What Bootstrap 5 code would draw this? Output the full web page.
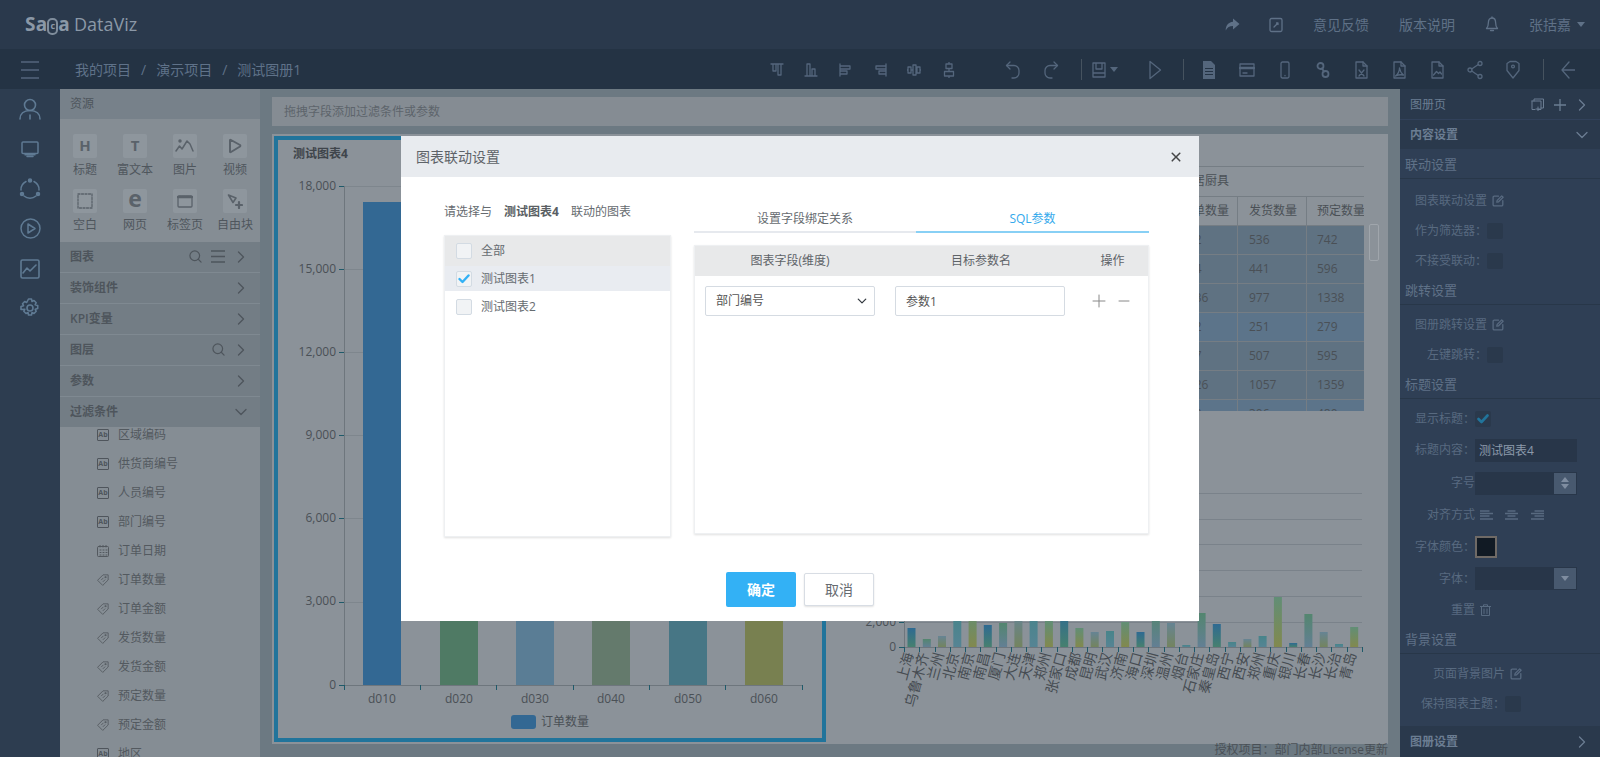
<!DOCTYPE html>
<html lang="zh-CN">
<head>
<meta charset="utf-8">
<title>DataViz</title>
<link href="https://cdn.jsdelivr.net/npm/bootstrap@5.3.0/dist/css/bootstrap.min.css" rel="stylesheet">
<style>
html,body{height:100%;}
body{font-family:"Open Sans","Noto Sans CJK SC",sans-serif;font-size:12px;background:#6c7982;overflow:hidden;}
svg.ic{fill:none;stroke:currentColor;stroke-width:1.3;stroke-linecap:round;stroke-linejoin:round;display:block;flex:none;}
svg.fl{fill:currentColor;stroke:none;}
.dv-shell{width:1600px;height:757px;position:relative;overflow:hidden;}
.dv-top{height:50px;background:#2a394c;color:#5f7187;font-size:14px;padding-left:25px;padding-right:15px;}
.dv-logo{color:#8b98a7;font-size:19px;line-height:1;white-space:nowrap;}
.dv-logo b{font-weight:700;letter-spacing:.2px;}
.dv-logo i{font-style:normal;font-size:18px;margin-left:4px;}
.dv-logo u{text-decoration:none;display:inline-block;width:11px;height:17px;margin:0;border:2px solid #7f8d9c;border-radius:5px;font-size:9px;font-weight:700;line-height:12px;text-align:center;vertical-align:2px;}
.dv-caret{width:0;height:0;border-left:4px solid transparent;border-right:4px solid transparent;border-top:5px solid currentColor;}
.dv-bar2{height:40px;background:#243344;color:#54667c;padding-left:21px;padding-right:13px;padding-top:2px;}
.dv-crumbs{font-size:14px;margin-left:36px;color:#5f7289;}
.dv-crumbs span{margin:0 10px;}
.dv-t{width:38px;display:flex;justify-content:center;flex:none;}
.dv-ta{width:34.4px;}
.dv-sep{width:1px;height:21px;background:#46535f;flex:none;}
.dv-rail{width:60px;background:#2d3d50;color:#5f7a93;padding-top:1px;}
.dv-rail>div{height:39.8px;display:flex;align-items:center;justify-content:center;}
.dv-res{width:200px;background:#858d94;color:#4e555c;overflow:hidden;}
.dv-reshead{height:30px;background:#77818a;padding-left:10px;line-height:30px;}
.dv-tiles{height:123px;padding-top:15px;display:grid;grid-template-columns:repeat(4,50px);grid-auto-rows:55px;}
.dv-tile{display:flex;flex-direction:column;align-items:center;color:#4f565d;}
.dv-tile>div{width:24px;height:24px;background:#8e969d;border-radius:2px;display:flex;align-items:center;justify-content:center;margin-bottom:3px;font-weight:700;font-size:15px;color:#5a626a;line-height:1;}
.dv-acc{position:relative;z-index:2;}
.dv-accrow{height:31px;background:#737d85;border-bottom:1px solid #7f8991;padding:0 13px 0 10px;font-weight:600;color:#4e555c;}
.dv-accrow:last-child{border-bottom:0;height:30px;}
.dv-fields{margin-top:-6px;padding:0;}
.dv-field{height:29px;padding-left:37px;color:#53595f;gap:9px;}
.dv-ab{width:12px;height:12px;border:1px solid #4f555c;border-radius:1px;font-size:7px;font-weight:700;line-height:10px;text-align:center;color:#4f555c;flex:none;}
.dv-main{width:1140px;background:#6c7982;padding:8px 12px 0;}
.dv-filter{height:29px;background:#858c93;color:#5d646b;padding-left:12px;line-height:29px;margin-bottom:8px;}
.dv-canvas{height:610px;background:#8b9299;padding:2px 0 0 2px;}
.dv-frame{width:552px;height:606px;border:4px solid #21749b;flex:none;}
.dv-frame svg,.dv-ch2 svg{display:block;}
svg text{font-family:"Open Sans","Noto Sans CJK SC",sans-serif;font-size:12px;fill:#4a5056;}
.dv-ch2{flex:1;position:relative;padding-top:30px;}
.dv-tblwrap{width:196px;height:245px;overflow:hidden;margin-left:342px;}
.dv-tbl{width:196px;table-layout:fixed;border-color:#757d84;color:#4a5056;--bs-table-bg:transparent;font-size:12px;}
.dv-tbl th,.dv-tbl td{height:29px;padding:0 0 0 11px;vertical-align:middle;font-weight:400;white-space:nowrap;overflow:hidden;background:transparent;line-height:1;}
.dv-tbl th:first-child,.dv-tbl td:first-child{padding-left:12px;}
.dv-tbl th:last-child:not(:first-child),.dv-tbl td:last-child{padding-left:10px;}
.dv-tbl .r1 td{background:#5f7282;}
.dv-tbl .r2 td{background:#5c748a;}
.dv-sb{position:absolute;left:543px;top:88px;width:10px;height:37px;border:1px solid #a0a6ac;border-radius:2px;}
.dv-lic{font-size:12px;line-height:12px;text-align:right;color:#4a5056;height:12px;white-space:nowrap;}
.dv-side{width:200px;background:#2f3f55;color:#586a80;position:relative;overflow:hidden;}
.dv-sh{height:31px;background:#2a394c;border-bottom:1px solid #31415a;padding:2px 12px 0 10px;color:#6b7d92;}
.dv-sh2{height:29px;background:#2a394c;padding:2px 12px 0 10px;font-weight:700;color:#6b7d92;}
.dv-sec{height:29px;border-bottom:1px solid #283749;padding:3px 0 0 5px;font-size:13px;color:#5f7187;margin-bottom:5px;}
.dv-sec-first{height:30px;margin-bottom:7px;}
.dv-sr{height:30px;padding-left:15px;}
.dv-gi{margin-left:5px;}
.dv-cb{width:16px;height:16px;background:#2a394c;border-radius:2px;flex:none;display:flex;align-items:center;justify-content:center;color:#21749b;}
.dv-inp{width:102px;height:23px;background:#283649;flex:none;color:#8c9aab;padding-left:4px;line-height:23px;font-size:12px;position:relative;}
.dv-spin{position:absolute;right:1px;top:1px;bottom:1px;width:22px;background:#48596f;color:#7f8da0;display:flex;flex-direction:column;align-items:center;justify-content:center;gap:2px;}
.dv-swatch{width:22px;height:22px;background:#111a24;border:2px solid #6f6a66;flex:none;}
.dv-foot{position:absolute;left:0;right:0;bottom:0;height:31px;background:#2a394c;padding:0 12px 0 10px;font-weight:700;color:#6b7d92;}
.dv-modal{position:absolute;left:401px;top:136px;width:798px;height:485px;z-index:10;}
.dv-modal .modal-content{height:100%;border:0;border-radius:0;background:#fff;color:#666b70;font-size:12px;}
.dv-modal .modal-header{height:41px;padding:0 15px;background:#e8ebef;border:0;border-radius:0;}
.dv-modal .modal-title{font-size:14px;font-weight:400;color:#5e6368;line-height:1;}
.dv-modal .btn-close{width:12px;height:12px;padding:0;margin:0 2px 0 0;background-size:12px;opacity:.7;}
.dv-modal .modal-body{padding:24px 50px 0 43px;flex:none;gap:23px;}
.dv-lbox{width:227px;height:302px;border:1px solid #eef0f2;box-shadow:0 1px 2px rgba(0,0,0,.12);}
.dv-li{padding-left:11px;gap:9px;height:32px;}
.dv-li:nth-child(1){height:30px;background:#e8e9ea;}
.dv-li:nth-child(2){height:25px;background:#e9ecf1;}
.dv-chk{width:16px;height:16px;border:1px solid #d3dbe3;background:#f1f3f5;border-radius:2px;color:#33b1f5;display:flex;align-items:center;justify-content:center;}
.dv-tabs{height:28px;}
.dv-tabs .nav-item:first-child{width:222px;}
.dv-tabs .nav-item:last-child{width:233px;}
.dv-tabs .nav-link{padding:0;height:28px;line-height:27px;font-size:12px;color:#666b70;text-align:center;border-bottom:2px solid #e6e9ee;}
.dv-tabs .nav-link.active{color:#33a9ec;border-bottom-color:#88d0f5;background:transparent;}
.dv-pane{height:289px;margin-top:12px;border:1px solid #eef0f2;box-shadow:0 1px 2px rgba(0,0,0,.12);}
.dv-phead{height:30px;background:#e8e9ea;color:#5e6368;}
.dv-phead div{text-align:center;}
.dv-prow{padding:10px 0 0 10px;color:#888;}
.dv-prow .form-select,.dv-prow .form-control{width:170px;height:30px;flex:none;font-size:12px;color:#555;border:1px solid #d5dbe2;border-radius:2px;padding:0 10px;}
.dv-prow .form-select{padding-right:20px;background-position:right 6px center;background-size:12px 10px;}
.dv-modal .modal-footer{border:0;padding:0;position:absolute;left:0;right:0;top:436px;gap:8px;justify-content:center;}
.dv-ok,.dv-no{width:70px;font-size:14px;margin:0;padding:0;border-radius:2px;line-height:1;}
.dv-ok{height:35px;background:#33b1f5;border:0;color:#fff;font-weight:600;}
.dv-no{height:33px;background:#fff;border:1px solid #d8dde4;color:#666b70;box-shadow:0 1px 2px rgba(0,0,0,.12);}
</style>
</head>
<body>
<svg width="0" height="0" class="position-absolute">
<defs>
<symbol id="chev" viewBox="0 0 12 12"><path d="M3.5 1l5 5-5 5"/></symbol>
<symbol id="chevd" viewBox="0 0 12 12"><path d="M1 3.5l5 5 5-5"/></symbol>
<symbol id="srch" viewBox="0 0 14 14"><circle cx="6.2" cy="6.2" r="5.2"/><path d="M10 10l3 3"/></symbol>
<symbol id="edit" viewBox="0 0 12 12"><path d="M6.5 1.2H2.3a1.2 1.2 0 0 0-1.2 1.2v7.3a1.2 1.2 0 0 0 1.2 1.2h7.3a1.2 1.2 0 0 0 1.2-1.2V5.6"/><path d="M4.8 7.2l.4-1.8L9.7.9l1.4 1.4-4.5 4.5z"/></symbol>
<symbol id="tag" viewBox="0 0 14 14"><path d="M1 7l6-6h6v6l-6 6z"/><path d="M5.2 6.8l2-2M7.2 8.8l2-2M9.7 3.2h1v1h-1z"/></symbol>
<symbol id="file" viewBox="0 0 13 18"><path d="M1 1h7l4 4v12H1z"/><path d="M8 1v4h4"/></symbol>
</defs>
</svg>
<div class="dv-shell d-flex flex-column">
  <div class="dv-top d-flex align-items-center flex-none">
    <div class="dv-logo"><b>Sa<u>c</u>a</b><i>DataViz</i></div>
    <div class="ms-auto d-flex align-items-center">
      <svg class="ic fl" width="20" height="20" viewBox="0 0 20 20"><path d="M11 3.5l6.5 5.5-6.5 5.5v-3.4c-3.6 0-5.7 1.4-7.3 4.4 0-5 2.4-8.3 7.3-8.8z"/></svg>
      <svg class="ic ms-4" width="20" height="20" viewBox="0 0 20 20"><rect x="4" y="3.5" width="12" height="13" rx="1.5"/><path d="M8 12l4-4M10.5 8H12v1.5"/></svg>
      <span style="margin-left:27px">意见反馈</span>
      <span style="margin-left:30px">版本说明</span>
      <svg class="ic" style="margin-left:27px" width="20" height="20" viewBox="0 0 20 20"><path d="M10 3c-2.6 0-3.6 2-3.6 4.5 0 3-.9 5-1.9 6h11c-1-1-1.9-3-1.9-6C13.600 5 12.600 3 10 3z"/><path d="M8.500 15.500h3M10 1.800V3"/></svg>
      <span style="margin-left:27px">张括嘉</span>
      <span class="dv-caret" style="margin-left:6px"></span>
    </div>
  </div>
  <div class="dv-bar2 d-flex align-items-center flex-none">
    <svg class="ic" width="18" height="18" viewBox="0 0 18 18" style="stroke-width:1.4"><path d="M0 1h18M0 9h18M0 17h18"/></svg>
    <div class="dv-crumbs">我的项目<span>/</span>演示项目<span>/</span>测试图册1</div>
    <div class="ms-auto d-flex align-items-center">
      <div class="dv-t dv-ta"><svg class="ic" width="14" height="14" viewBox="0 0 14 14"><path d="M1 1h12M3 1v7h3V1M8 1v11h3V1"/></svg></div>
      <div class="dv-t dv-ta"><svg class="ic" width="14" height="14" viewBox="0 0 14 14"><path d="M1 13h12M3 13V1h3v12M8 13V6h3v7"/></svg></div>
      <div class="dv-t dv-ta"><svg class="ic" width="14" height="14" viewBox="0 0 14 14"><path d="M1 1v12M1 3h10v3H1M1 8h7v3H1"/></svg></div>
      <div class="dv-t dv-ta"><svg class="ic" width="14" height="14" viewBox="0 0 14 14"><path d="M13 1v12M13 3H3v3h10M13 8H6v3h7"/></svg></div>
      <div class="dv-t dv-ta"><svg class="ic" width="14" height="14" viewBox="0 0 14 14"><path d="M0 7h1M5 7h1M9 7h1M13 7h1M1 4h3v6H1zM6 2h3v10H6zM10 4h3v6h-3z"/></svg></div>
      <div class="dv-t dv-ta"><svg class="ic" width="14" height="16" viewBox="0 0 14 16"><path d="M7 0v2M7 6.500v3M7 14v2M4 2h6v4.500H4zM2.500 9.500h9V14h-9z"/></svg></div>
      <div class="dv-t" style="margin-left:28px"><svg class="ic" width="16" height="20" viewBox="0 0 16 20"><path d="M5 2L1.500 5.500 5 9"/><path d="M1.500 5.500H9a5 5 0 0 1 5 5V13a5 5 0 0 1-5 5H7"/></svg></div>
      <div class="dv-t"><svg class="ic" width="16" height="20" viewBox="0 0 16 20"><path d="M11 2l3.500 3.500L11 9"/><path d="M14.500 5.500H7a5 5 0 0 0-5 5V13a5 5 0 0 0 5 5h2"/></svg></div>
      <div class="dv-sep" style="margin-left:11px"></div>
      <div class="d-flex align-items-center" style="margin-left:10px;width:36px;gap:4px"><svg class="ic" width="14" height="16" viewBox="0 0 14 16"><path d="M1 1h12v14H1zM4 1v6h6V1M1 11h12"/></svg><span class="dv-caret"></span></div>
      <div class="dv-t" style="margin-left:8px"><svg class="ic" width="14" height="20" viewBox="0 0 14 20"><path d="M2 1.500L12.500 10 2 18.500z"/></svg></div>
      <div class="dv-sep" style="margin-left:9px"></div>
      <div class="dv-t" style="margin-left:6px"><svg class="ic fl" width="12" height="18" viewBox="0 0 12 18"><path d="M0 0h8l4 4v14H0z"/><path d="M2 7h8v1H2zM2 10h8v1H2zM2 13h8v1H2z" fill="#243344"/></svg></div>
      <div class="dv-t"><svg class="ic" width="16" height="14" viewBox="0 0 16 14"><rect x="1" y="1" width="14" height="12"/><path d="M1 5h14" stroke-width="2.500"/><path d="M4 10h4"/></svg></div>
      <div class="dv-t"><svg class="ic" width="10" height="18" viewBox="0 0 10 18"><rect x="1" y="1" width="8" height="16" rx="1.500"/><path d="M5 14.500v.3"/></svg></div>
      <div class="dv-t"><svg class="ic" width="14" height="18" viewBox="0 0 14 18" style="stroke-width:1.800"><circle cx="4.500" cy="5" r="3"/><circle cx="9.500" cy="13" r="3"/><path d="M6 7.500l2 3"/></svg></div>
      <div class="dv-t"><svg class="ic" width="13" height="18" viewBox="0 0 13 18"><use href="#file"/><path d="M4 9l5 6M9 9l-5 6"/></svg></div>
      <div class="dv-t"><svg class="ic" width="13" height="18" viewBox="0 0 13 18"><use href="#file"/><path d="M6.500 7c0 3-1.500 6-4 8 3-1.500 5-1.500 8-1-2-1.500-3.500-4-4-7z"/></svg></div>
      <div class="dv-t"><svg class="ic" width="13" height="18" viewBox="0 0 13 18"><use href="#file"/><path d="M2.500 14l3-3.500 2 2 1.500-1.500 1.500 2"/></svg></div>
      <div class="dv-t"><svg class="ic" width="16" height="20" viewBox="0 0 16 20"><circle cx="3" cy="10" r="2"/><circle cx="13" cy="3.500" r="2"/><circle cx="13" cy="16.500" r="2"/><path d="M4.700 9l6.600-4.500M4.700 11l6.600 4.500"/></svg></div>
      <div class="dv-t"><svg class="ic" width="14" height="20" viewBox="0 0 14 20"><path d="M7 18L1 10.500V3.500l3-2h6l3 2v7z"/><circle cx="7" cy="6.500" r="1.400"/></svg></div>
      <div class="dv-sep" style="margin-left:11px"></div>
      <div class="dv-t" style="margin-left:5px"><svg class="ic" width="14" height="18" viewBox="0 0 14 18"><path d="M8 1L1 9l7 8M1 9h13"/></svg></div>
    </div>
  </div>
  <div class="d-flex flex-grow-1" style="min-height:0">
    <div class="dv-rail flex-none">
      <div><svg class="ic" width="22" height="22" viewBox="0 0 22 22" style="stroke-width:1.600"><circle cx="11" cy="7" r="5.500"/><path d="M1 21c0-5 3.500-8.500 10-8.500S21 16 21 21M11 17v4"/></svg></div>
      <div><svg class="ic" width="18" height="18" viewBox="0 0 18 18" style="stroke-width:1.500"><rect x="1" y="2" width="16" height="11.500" rx="1"/><path d="M6 16.500h6M4 14.800h10"/></svg></div>
      <div><svg class="ic" width="22" height="22" viewBox="0 0 22 22" style="stroke-width:1.500"><path d="M7 3.500A9 9 0 0 0 2 12M15 3.500A9 9 0 0 1 20 12M5 18a9 9 0 0 0 12 0"/><circle cx="11" cy="2.500" r="1.500" fill="currentColor"/><circle cx="3" cy="16" r="1.500" fill="currentColor"/><circle cx="19" cy="16" r="1.500" fill="currentColor"/></svg></div>
      <div><svg class="ic" width="21" height="21" viewBox="0 0 21 21" style="stroke-width:1.500"><circle cx="10.500" cy="10.500" r="9.500"/><path d="M8 6l7 4.500L8 15z"/></svg></div>
      <div><svg class="ic" width="20" height="20" viewBox="0 0 20 20" style="stroke-width:1.600"><rect x="1" y="1" width="18" height="18" rx="1.500"/><path d="M3 14l4-5 3 3 6-6"/></svg></div>
      <div><svg class="ic" width="20" height="20" viewBox="0 0 20 20" style="stroke-width:1.600"><path d="M8.500 1h3l.5 2.500 2-1 2.200 2.200-1 2 2.500.8v3l-2.500.8 1 2-2.200 2.200-2-1-.5 2.500h-3l-.5-2.500-2 1-2.200-2.200 1-2L1 11.500v-3l2.500-.8-1-2L4.700 3.500l2 1z"/><circle cx="10" cy="10" r="3"/></svg></div>
    </div>
    <div class="dv-res flex-none">
      <div class="dv-reshead">资源</div>
      <div class="dv-tiles">
        <div class="dv-tile"><div>H</div>标题</div>
        <div class="dv-tile"><div>T</div>富文本</div>
        <div class="dv-tile"><div><svg class="ic" width="20" height="16" viewBox="0 0 20 16" style="stroke-width:1.500"><path d="M1 13l3.500-5 2.500 3 5-8 3 3 3 7"/><circle cx="5" cy="3" r="1" fill="currentColor"/></svg></div>图片</div>
        <div class="dv-tile"><div><svg class="ic" width="14" height="16" viewBox="0 0 14 16" style="stroke-width:2"><path d="M2 2v12a1 1 0 0 0 1 0l9-5.500a1 1 0 0 0 0-1.500L3 2a1 1 0 0 0-1 0z"/></svg></div>视频</div>
        <div class="dv-tile"><div><svg class="ic" width="16" height="16" viewBox="0 0 16 16" stroke-dasharray="2 1.500"><rect x="1" y="1" width="14" height="14"/></svg></div>空白</div>
        <div class="dv-tile"><div style="font-size:23px;padding-bottom:5px">e</div>网页</div>
        <div class="dv-tile"><div><svg class="ic" width="16" height="14" viewBox="0 0 16 14"><rect x="1" y="2" width="14" height="11" rx="1"/><path d="M1 3h14" stroke-width="2.500" stroke-dasharray="3 1"/></svg></div>标签页</div>
        <div class="dv-tile"><div><svg class="ic" width="16" height="16" viewBox="0 0 16 16" style="stroke-width:1.600"><path d="M1.500 2L9 5 6 9.500z"/><path d="M12 9v6M9 12h6" stroke-width="2.200"/></svg></div>自由块</div>
      </div>
      <div class="dv-acc">
        <div class="dv-accrow d-flex align-items-center">图表<svg class="ic ms-auto" width="13" height="13"><use href="#srch"/></svg><svg class="ic" style="margin-left:9px" width="14" height="13" viewBox="0 0 14 13"><path d="M0 1h14M0 6.500h14M0 12h14"/></svg><svg class="ic" style="margin-left:10px" width="12" height="12"><use href="#chev"/></svg></div>
        <div class="dv-accrow d-flex align-items-center">装饰组件<svg class="ic ms-auto" width="12" height="12"><use href="#chev"/></svg></div>
        <div class="dv-accrow d-flex align-items-center">KPI变量<svg class="ic ms-auto" width="12" height="12"><use href="#chev"/></svg></div>
        <div class="dv-accrow d-flex align-items-center">图层<svg class="ic ms-auto" width="13" height="13"><use href="#srch"/></svg><svg class="ic" style="margin-left:10px" width="12" height="12"><use href="#chev"/></svg></div>
        <div class="dv-accrow d-flex align-items-center">参数<svg class="ic ms-auto" width="12" height="12"><use href="#chev"/></svg></div>
        <div class="dv-accrow d-flex align-items-center">过滤条件<svg class="ic ms-auto" width="12" height="12"><use href="#chevd"/></svg></div>
      </div>
      <div class="dv-fields">
        <div class="dv-field d-flex align-items-center"><span class="dv-ab">Ab</span>区域编码</div>
        <div class="dv-field d-flex align-items-center"><span class="dv-ab">Ab</span>供货商编号</div>
        <div class="dv-field d-flex align-items-center"><span class="dv-ab">Ab</span>人员编号</div>
        <div class="dv-field d-flex align-items-center"><span class="dv-ab">Ab</span>部门编号</div>
        <div class="dv-field d-flex align-items-center"><svg class="ic" width="12" height="12" viewBox="0 0 12 12" style="stroke-width:1"><rect x=".5" y="1.500" width="11" height="10" rx="1"/><path d="M3 0v2M6 0v2M9 0v2M3 5h1M6 5h1M9 5h1M3 7.500h1M6 7.500h1M9 7.500h1M3 10h1M6 10h1M9 10h1"/></svg>订单日期</div>
        <div class="dv-field d-flex align-items-center"><svg class="ic" width="12" height="12" style="stroke-width:1"><use href="#tag"/></svg>订单数量</div>
        <div class="dv-field d-flex align-items-center"><svg class="ic" width="12" height="12" style="stroke-width:1"><use href="#tag"/></svg>订单金额</div>
        <div class="dv-field d-flex align-items-center"><svg class="ic" width="12" height="12" style="stroke-width:1"><use href="#tag"/></svg>发货数量</div>
        <div class="dv-field d-flex align-items-center"><svg class="ic" width="12" height="12" style="stroke-width:1"><use href="#tag"/></svg>发货金额</div>
        <div class="dv-field d-flex align-items-center"><svg class="ic" width="12" height="12" style="stroke-width:1"><use href="#tag"/></svg>预定数量</div>
        <div class="dv-field d-flex align-items-center"><svg class="ic" width="12" height="12" style="stroke-width:1"><use href="#tag"/></svg>预定金额</div>
        <div class="dv-field d-flex align-items-center"><span class="dv-ab">Ab</span>地区</div>
      </div>
    </div>
    <div class="dv-main flex-none">
      <div class="dv-filter">拖拽字段添加过滤条件或参数</div>
      <div class="dv-canvas d-flex">
        <div class="dv-frame">
          <svg width="544" height="598" viewBox="278 141 544 598">
            <text x="293" y="159" style="font-size:12px;font-weight:700;fill:#3f454b">测试图表4</text>
            <g stroke="#7e868d" stroke-width="1"><path d="M344 187.500H803M344 270.500H803M344 353.500H803M344 436.500H803M344 519.500H803M344 603.500H803"/></g>
            <path d="M344.500 187V686.500H803" fill="none" stroke="#6e767d"/>
            <g stroke="#1f5a6a"><path d="M339 187.500h5M339 270.500h5M339 353.500h5M339 436.500h5M339 519.500h5M339 603.500h5M339 686.500h5"/><path d="M344.500 686v5M420.500 686v5M496.500 686v5M573.500 686v5M649.500 686v5M725.500 686v5M802.500 686v5"/></g>
            <g text-anchor="end"><text x="336" y="191">18,000</text><text x="336" y="274">15,000</text><text x="336" y="357">12,000</text><text x="336" y="440">9,000</text><text x="336" y="523">6,000</text><text x="336" y="606">3,000</text><text x="336" y="690">0</text></g>
            <rect x="363" y="203" width="38" height="483" fill="#336893"/>
            <rect x="440" y="560" width="38" height="126" fill="#4f7a64"/>
            <rect x="516" y="560" width="38" height="126" fill="#5a7d95"/>
            <rect x="592" y="560" width="38" height="126" fill="#647a6c"/>
            <rect x="669" y="560" width="38" height="126" fill="#477685"/>
            <rect x="745" y="560" width="38" height="126" fill="#788050"/>
            <g text-anchor="middle"><text x="382" y="704">d010</text><text x="459" y="704">d020</text><text x="535" y="704">d030</text><text x="611" y="704">d040</text><text x="688" y="704">d050</text><text x="764" y="704">d060</text></g>
            <rect x="511" y="716" width="25" height="14" rx="3" fill="#336893"/>
            <text x="541" y="727">订单数量</text>
          </svg>
        </div>
        <div class="dv-ch2">
          <div class="dv-tblwrap">
            <table class="table table-bordered mb-0 dv-tbl">
              <colgroup><col style="width:69px"><col style="width:69px"><col style="width:58px"></colgroup>
              <thead>
                <tr><th colspan="3" style="height:30px">家居厨具</th></tr>
                <tr><th>订单数量</th><th>发货数量</th><th>预定数量</th></tr>
              </thead>
              <tbody>
                <tr class="r1"><td>672</td><td>536</td><td>742</td></tr>
                <tr class="r1"><td>554</td><td>441</td><td>596</td></tr>
                <tr class="r1"><td>1136</td><td>977</td><td>1338</td></tr>
                <tr class="r2"><td>262</td><td>251</td><td>279</td></tr>
                <tr class="r1"><td>527</td><td>507</td><td>595</td></tr>
                <tr class="r1"><td>1226</td><td>1057</td><td>1359</td></tr>
                <tr class="r2"><td>352</td><td>306</td><td>480</td></tr>
              </tbody>
            </table>
          </div>
          <div class="dv-sb"></div>
          <svg id="chart2" width="562" height="333" viewBox="826 412 562 333"></svg>
        </div>
      </div>
      <div class="dv-lic">授权项目：部门内部License更新</div>
    </div>
    <div class="dv-side flex-none">
      <div class="dv-sh d-flex align-items-center">图册页<svg class="ic ms-auto" width="13" height="13" viewBox="0 0 13 13" style="stroke-width:1"><path d="M3 3V1h9.500v9H10M1 3h9v8.500H7M1 3v8.500h3M7 9v4M5 11h4"/></svg><svg class="ic" style="margin-left:10px" width="12" height="12" viewBox="0 0 12 12"><path d="M6 0v12M0 6h12"/></svg><svg class="ic" style="margin-left:10px" width="12" height="12"><use href="#chev"/></svg></div>
      <div class="dv-sh2 d-flex align-items-center">内容设置<svg class="ic ms-auto" width="12" height="12"><use href="#chevd"/></svg></div>
      <div class="dv-sec dv-sec-first d-flex align-items-center">联动设置</div>
      <div class="dv-sr d-flex align-items-center"><span>图表联动设置</span><svg class="ic dv-gi" width="12" height="12"><use href="#edit"/></svg></div>
      <div class="dv-sr d-flex align-items-center"><span>作为筛选器：</span><span class="dv-cb"></span></div>
      <div class="dv-sr d-flex align-items-center"><span>不接受联动：</span><span class="dv-cb"></span></div>
      <div class="dv-sec d-flex align-items-center">跳转设置</div>
      <div class="dv-sr d-flex align-items-center"><span>图册跳转设置</span><svg class="ic dv-gi" width="12" height="12"><use href="#edit"/></svg></div>
      <div class="dv-sr d-flex align-items-center" style="padding-left:27px"><span>左键跳转：</span><span class="dv-cb"></span></div>
      <div class="dv-sec d-flex align-items-center">标题设置</div>
      <div class="dv-sr d-flex align-items-center"><span>显示标题：</span><span class="dv-cb"><svg class="ic" width="12" height="10" viewBox="0 0 12 10" style="stroke-width:2.600"><path d="M1.500 5l3 3 6-6.500"/></svg></span></div>
      <div class="dv-sr d-flex align-items-center" style="height:33px"><span>标题内容：</span><span class="dv-inp">测试图表4</span></div>
      <div class="dv-sr d-flex align-items-center" style="height:33px;padding-left:51px"><span>字号</span><span class="dv-inp"><span class="dv-spin"><svg width="8" height="5" viewBox="0 0 8 5" fill="currentColor"><path d="M4 0l4 5H0z"/></svg><svg width="8" height="5" viewBox="0 0 8 5" fill="currentColor"><path d="M4 5L8 0H0z"/></svg></span></span></div>
      <div class="dv-sr d-flex align-items-center" style="height:31px;padding-left:27px"><span>对齐方式</span><svg class="ic dv-gi" width="13" height="10" viewBox="0 0 13 10"><path d="M0 1h9M0 3.500h13M0 6h9M0 9h13"/></svg><svg class="ic" style="margin-left:12px" width="13" height="10" viewBox="0 0 13 10"><path d="M3 1h7M0 3.500h13M3 6h7M0 9h13"/></svg><svg class="ic" style="margin-left:13px" width="13" height="10" viewBox="0 0 13 10"><path d="M4 1h9M0 3.500h13M4 6h9M0 9h13"/></svg></div>
      <div class="dv-sr d-flex align-items-center" style="height:32px"><span>字体颜色：</span><span class="dv-swatch"></span></div>
      <div class="dv-sr d-flex align-items-center" style="height:32px;padding-left:39px"><span>字体：</span><span class="dv-inp"><span class="dv-spin"><svg width="8" height="5" viewBox="0 0 8 5" fill="currentColor"><path d="M4 5L8 0H0z"/></svg></span></span></div>
      <div class="dv-sr d-flex align-items-center" style="padding-left:51px"><span>重置</span><svg class="ic dv-gi" width="11" height="12" viewBox="0 0 11 12" style="stroke-width:1"><path d="M0 2.500h11M3.500 2.500V.8h4v1.700M1.500 2.500V11.500h8V2.500M4 5v4.500M7 5v4.500"/></svg></div>
      <div class="dv-sec d-flex align-items-center">背景设置</div>
      <div class="dv-sr d-flex align-items-center" style="padding-left:33px"><span>页面背景图片</span><svg class="ic dv-gi" width="12" height="12"><use href="#edit"/></svg></div>
      <div class="dv-sr d-flex align-items-center" style="padding-left:21px"><span>保持图表主题：</span><span class="dv-cb"></span></div>
      <div class="dv-foot d-flex align-items-center">图册设置<svg class="ic ms-auto" width="12" height="12"><use href="#chev"/></svg></div>
    </div>
  </div>

  <div class="dv-modal">
    <div class="modal-content">
      <div class="modal-header">
        <h5 class="modal-title">图表联动设置</h5>
        <button type="button" class="btn-close" aria-label="Close"></button>
      </div>
      <div class="modal-body d-flex">
        <div>
          <div class="d-flex align-items-center" style="height:22px;margin-bottom:12px;white-space:nowrap"><span>请选择与</span><strong class="mx-2 px-1" style="font-weight:700;color:#5a5f64">测试图表4</strong><span>联动的图表</span></div>
          <div class="dv-lbox">
            <div class="dv-li d-flex align-items-center"><span class="dv-chk"></span>全部</div>
            <div class="dv-li d-flex align-items-center"><span class="dv-chk"><svg class="ic" width="12" height="10" viewBox="0 0 12 10" style="stroke-width:2.400"><path d="M1.500 5l3 3 6-6.500"/></svg></span>测试图表1</div>
            <div class="dv-li d-flex align-items-center"><span class="dv-chk"></span>测试图表2</div>
          </div>
        </div>
        <div style="width:455px;margin-top:4px">
          <ul class="nav dv-tabs">
            <li class="nav-item"><a class="nav-link" href="#">设置字段绑定关系</a></li>
            <li class="nav-item"><a class="nav-link active" href="#">SQL参数</a></li>
          </ul>
          <div class="dv-pane">
            <div class="dv-phead d-flex align-items-center"><div style="width:190px">图表字段(维度)</div><div style="width:192px">目标参数名</div><div style="width:71px">操作</div></div>
            <div class="dv-prow d-flex align-items-center">
              <select class="form-select"><option>部门编号</option></select>
              <input class="form-control" style="margin-left:20px" value="参数1">
              <svg class="ic" style="margin-left:27px;stroke-width:1" width="14" height="14" viewBox="0 0 14 14"><path d="M7 1v12M1 7h12"/></svg>
              <svg class="ic" style="margin-left:11px;stroke-width:1" width="14" height="14" viewBox="0 0 14 14"><path d="M2 7h10"/></svg>
            </div>
          </div>
        </div>
      </div>
      <div class="modal-footer d-flex align-items-center">
        <button type="button" class="btn dv-ok">确定</button>
        <button type="button" class="btn dv-no">取消</button>
      </div>
    </div>
  </div>
</div>
<script src="https://cdn.jsdelivr.net/npm/bootstrap@5.3.0/dist/js/bootstrap.bundle.min.js"></script>
<script>
(function(){
  var cities=["上海","乌鲁木齐","兰州","北京","南京","南昌","厦门","大连","天津","郑州","张家口","成都","昆明","武汉","济南","海口","深圳","温州","烟台","石家庄","秦皇岛","西宁","西安","郑州","重庆","银川","长春","长沙","长治","青岛"];
  var tops=[629,640,637,615,610,626,624,615,612,622,612,629,633,632,623,633,612,624,646,614,625,643,640,637,598,644,615,633,645,628];
  var grads=[["#2e6a92","#47806f"],["#53866f","#637f94"],["#668494","#74845f"],["#47848a","#568494"],["#618e76","#82894e"],["#2e6a92","#478577"]];
  var map=[0,1,2,3,4,0,1,2,3,4,0,4,2,3,4,0,1,2,3,1,0,3,2,3,4,0,1,2,3,4];
  var s='<defs>';
  grads.forEach(function(g,i){s+='<linearGradient id="bg'+i+'" x1="0" y1="0" x2="0" y2="1"><stop offset="0" stop-color="'+g[0]+'"/><stop offset="1" stop-color="'+g[1]+'"/></linearGradient>';});
  s+='</defs>';
  [494,520,545,571,597,623].forEach(function(y){s+='<path d="M904 '+(y+.5)+'H1362" stroke="#7a828a"/>';});
  s+='<path d="M904.500 480V648.500H1362" fill="none" stroke="#6e767d"/>';
  s+='<path d="M899 623.500h5M899 648.500h5" stroke="#1f5a6a"/>';
  s+='<text x="896" y="627" text-anchor="end">2,000</text><text x="896" y="652" text-anchor="end">0</text>';
  var w=458/30;
  cities.forEach(function(c,i){
    var x=904+i*w, h=648-tops[i];
    s+='<rect x="'+(x+3.500).toFixed(1)+'" y="'+tops[i]+'" width="8" height="'+h+'" fill="url(#bg'+map[i]+')"/>';
    s+='<path d="M'+(Math.round(x)+.5)+' 648v5" stroke="#1f5a6a"/>';
    var cx=(x+w/2+2).toFixed(1);
    s+='<text transform="translate('+cx+' 655) rotate(-75)" text-anchor="end" style="font-size:14px;fill:#464c52">'+c+'</text>';
  });
  s+='<path d="M1362.500 648v5" stroke="#1f5a6a"/>';
  document.getElementById('chart2').innerHTML=s;
})();
</script>
</body>
</html>
